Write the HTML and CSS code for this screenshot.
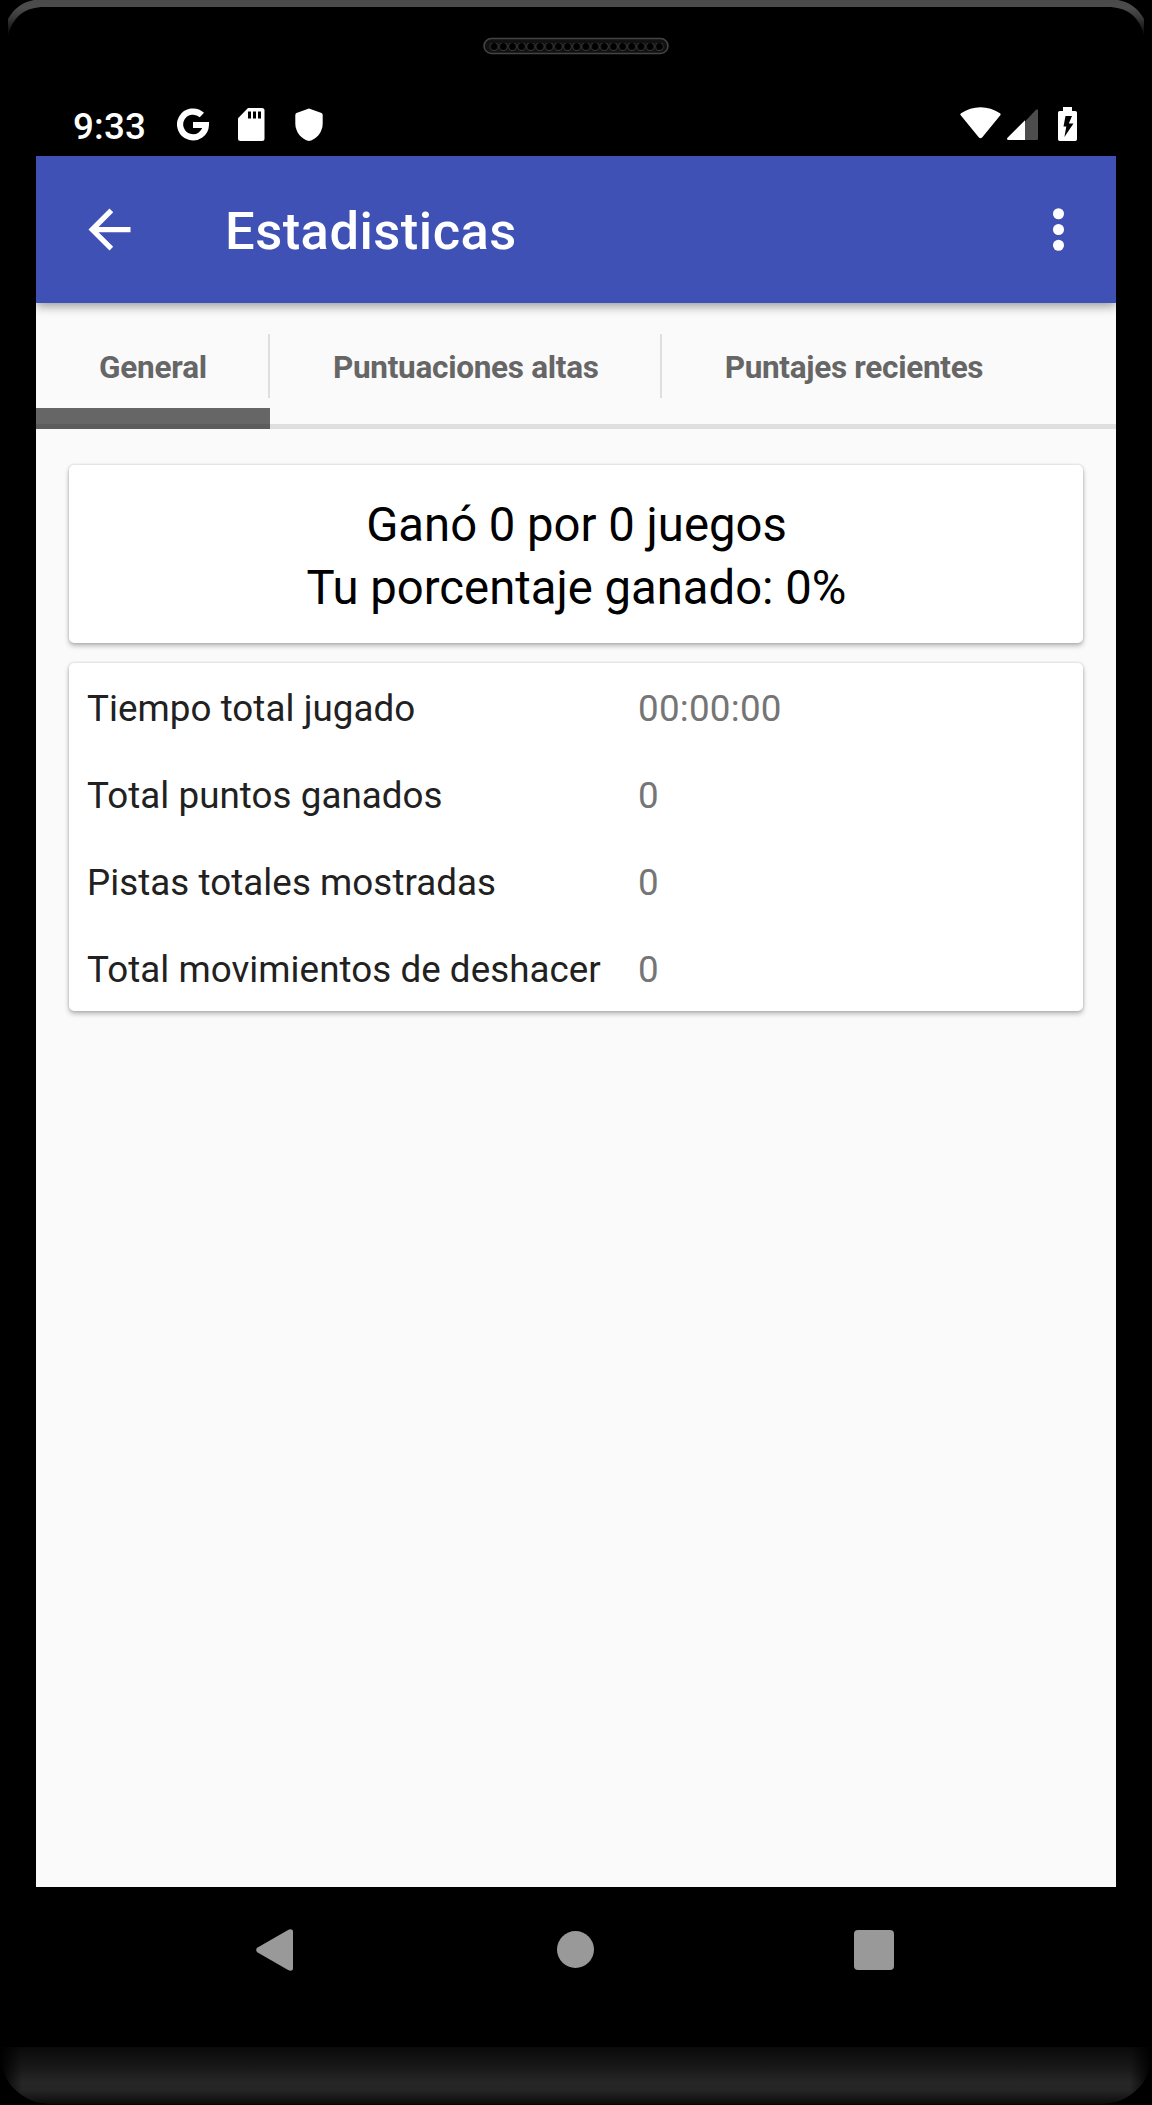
FILE: index.html
```html
<!DOCTYPE html>
<html lang="es">
<head>
    <meta charset="UTF-8">
    <meta name="viewport" content="width=device-width, initial-scale=1.0">
    <title>Estadisticas</title>
    <link rel="stylesheet" href="styles.css">
</head>
<body>
    <div class="phone">
        <svg class="bezel-top" width="1152" height="37" viewBox="0 0 1152 37">
            <defs>
                <linearGradient id="edge" x1="0" y1="0" x2="0" y2="1">
                    <stop offset="0" stop-color="#4a4a4a"/>
                    <stop offset="0.22" stop-color="#4c4c4c"/>
                    <stop offset="0.5" stop-color="#383838"/>
                    <stop offset="1" stop-color="#000"/>
                </linearGradient>
            </defs>
            <path fill="url(#edge)" d="M8 36V19Q17 3 34 0H1118Q1135 3 1144 19V36Q1138 9 1111 7H41Q14 9 8 36Z"/>
        </svg>
        <svg class="speaker" width="186" height="18" viewBox="0 0 186 18">
            <defs>
                <pattern id="holes" x="6.5" y="0" width="9.18" height="18" patternUnits="userSpaceOnUse">
                    <circle cx="4.6" cy="9.5" r="4" fill="#000" stroke="#383838" stroke-width="1"/>
                    <path d="M0 2H9.2V6H0z" fill="#111"/>
                </pattern>
            </defs>
            <rect x="1" y="1.5" width="184" height="15" rx="7.5" fill="#111" stroke="#444" stroke-width="1.6"/>
            <rect x="6.5" y="3" width="174" height="12" fill="url(#holes)"/>
        </svg>

        <div class="status-bar">
            <span class="time">9:33</span>
            <svg class="icon-google" width="32" height="33" viewBox="0 0 32 33">
                <path d="M24.9 7.1A12.9 12.9 0 1 0 28.9 17H16" fill="none" stroke="#fff" stroke-width="6.2"/>
            </svg>
            <svg class="icon-sd" width="27" height="33" viewBox="0 0 27 33">
                <path fill="#fff" d="M10 0H24Q26.500 0 26.500 2.500V30.500Q26.500 33 24 33H2.500Q0 33 0 30.500V10.300z"/>
                <path d="M10 3.500h3v7h-3zM15 3.500h3v7h-3zM20 3.500h3v7h-3z"/>
            </svg>
            <svg class="icon-shield" width="28" height="33" viewBox="0 0 28 33">
                <path fill="#fff" d="M14 .5L26.500 5Q27.700 5.500 27.700 7V15.500C27.700 24 21.500 31.500 14 33C6.500 31.500.3 24 .3 15.500V7Q.3 5.500 1.500 5z"/>
            </svg>
            <svg class="icon-wifi" width="41" height="32" viewBox="0 0 41 32">
                <path fill="#fff" d="M.7 8.300Q-.1 7 1 6.300Q10 .3 20.500.3T40 6.300Q41.100 7 40.300 8.300L22.300 30.300Q20.500 32.300 18.700 30.300z"/>
            </svg>
            <svg class="icon-signal" width="31" height="31" viewBox="0 0 31 31">
                <path fill="#4d4d4d" d="M18 12.500L29 .8Q31 -.5 31 1.500V29.500Q31 31 29.500 31H18z"/>
                <path fill="#fff" d="M18 11.300V31H1.500Q-.8 31 .5 28.800z"/>
            </svg>
            <svg class="icon-battery" width="19" height="34" viewBox="0 0 19 34">
                <path fill="#fff" d="M5 0H14V4H17.300Q19 4 19 5.700V32.300Q19 34 17.300 34H1.700Q0 34 0 32.300V5.700Q0 4 1.700 4H5z"/>
                <path d="M7.500 9H14L10.800 16.600H15.500L6.400 30L8.300 19.500H5.500z"/>
            </svg>
        </div>

        <main class="screen">
            <header class="app-bar">
                <svg width="63" height="63" viewBox="0 0 24 24">
                    <path fill="#fff" d="M20 11H7.830l5.590-5.590L12 4l-8 8 8 8 1.410-1.410L7.830 13H20v-2z"/>
                </svg>
                <h1>Estadisticas</h1>
                <svg width="63" height="63" viewBox="0 0 24 24" fill="#fff">
                    <circle cx="12" cy="6" r="2.100"/>
                    <circle cx="12" cy="12" r="2.100"/>
                    <circle cx="12" cy="18" r="2.100"/>
                </svg>
            </header>

            <nav class="tabs">
                <a class="tab active">General</a>
                <a class="tab">Puntuaciones altas</a>
                <a class="tab">Puntajes recientes</a>
            </nav>

            <section class="card summary">
                <p>Ganó 0 por 0 juegos</p>
                <p>Tu porcentaje ganado: 0%</p>
            </section>

            <dl class="card stats">
                <dt>Tiempo total jugado</dt>
                <dd>00:00:00</dd>
                <dt>Total puntos ganados</dt>
                <dd>0</dd>
                <dt>Pistas totales mostradas</dt>
                <dd>0</dd>
                <dt>Total movimientos de deshacer</dt>
                <dd>0</dd>
            </dl>
        </main>

        <div class="nav-bar">
            <svg width="37" height="42" viewBox="0 0 37 42">
                <path fill="#999" d="M1.200 18.800L32.500.7Q37 -.8 37 3V39Q37 42.800 32.500 41.300L1.200 23.200Q-.8 21 1.200 18.800z"/>
            </svg>
            <span class="home"></span>
            <span class="recents"></span>
        </div>
        <div class="bezel-bottom"></div>
    </div>
</body>
</html>
```

FILE: styles.css
```css
* {
    box-sizing: border-box;
}

body {
    margin: 0;
    background-color: #000;
    font-family: Roboto, "Liberation Sans", sans-serif;
}

h1, p, dl, dd {
    margin: 0;
}

svg {
    display: block;
    flex-shrink: 0;
}

.phone {
    display: flex;
    flex-direction: column;
    width: 1152px;
    height: 2105px;
    overflow: hidden;
    background-color: #000;
}

.speaker {
    margin-left: 483px;
}

/* status bar */
.status-bar {
    display: flex;
    align-items: center;
    height: 64px;
    margin-top: 37px;
    padding: 0 75px 0 73px;
}

.time {
    width: 104px;
    color: #fff;
    font-size: 36.75px;
    font-weight: 500;
    line-height: 40px;
    letter-spacing: 0.2px;
    margin-top: 5px;
}

.icon-sd {
    margin-left: 29px;
}

.icon-shield {
    margin-left: 30px;
}

.icon-wifi {
    margin-left: auto;
    margin-top: -2px;
}

.icon-signal {
    margin-left: 6px;
}

.icon-battery {
    margin-left: 20px;
}

/* app */
.screen {
    width: 1080px;
    height: 1731px;
    margin-left: 36px;
    overflow: hidden;
    background-color: #fafafa;
}

.app-bar {
    display: flex;
    align-items: center;
    height: 147px;
    padding: 0 26px 0 42px;
    background-color: #3f51b5;
    box-shadow: 0 3px 10px rgba(0, 0, 0, 0.4);
}

.app-bar h1 {
    flex: 1;
    margin-left: 84px;
    padding-top: 3px;
    color: #fff;
    font-size: 52.5px;
    font-weight: 500;
    line-height: 62px;
    letter-spacing: 0.48px;
}

.tabs {
    display: flex;
    height: 126px;
    background: linear-gradient(#dfdfdf, #dfdfdf) bottom / 100% 5px no-repeat;
}

.tab {
    display: flex;
    align-items: center;
    padding: 3px 63px 0;
    color: #666;
    font-size: 31.5px;
    font-weight: 700;
    letter-spacing: -0.29px;
    white-space: nowrap;
    background: linear-gradient(#dfdfdf, #dfdfdf) right 31px / 2px 64px no-repeat;
}

.tab:last-child {
    background: none;
}

.tab.active {
    letter-spacing: -0.2px;
    background:
        linear-gradient(#5c5c5c, #5c5c5c) bottom / 100% 5px no-repeat,
        linear-gradient(#666, #666) bottom / 100% 21px no-repeat,
        linear-gradient(#dfdfdf, #dfdfdf) right 31px / 2px 64px no-repeat;
}

.card {
    margin: 0 33px;
    background-color: #fff;
    border-radius: 5px;
    box-shadow: 0 3px 5px rgba(0, 0, 0, 0.26), 0 0 3px rgba(0, 0, 0, 0.18);
}

.summary {
    height: 178px;
    margin-top: 36px;
    padding: 29px 0 0 1px;
    color: #000;
    font-size: 47.25px;
    line-height: 63px;
    text-align: center;
}

.stats {
    display: grid;
    grid-template-columns: 551px 1fr;
    grid-auto-rows: 87px;
    height: 348px;
    margin-top: 20px;
    padding: 2px 18px 0;
    font-size: 36.75px;
    line-height: 87px;
}

.stats dt {
    color: #212121;
    letter-spacing: 0.05px;
}

.stats dd {
    color: #757575;
    letter-spacing: 0.25px;
}

/* navigation */
.nav-bar {
    display: flex;
    justify-content: space-between;
    align-items: center;
    height: 126px;
    padding: 0 258px 0 256px;
}

.home {
    width: 37px;
    height: 37px;
    margin: 0 0 1px 3px;
    border-radius: 50%;
    background-color: #999;
}

.recents {
    width: 40px;
    height: 40px;
    border-radius: 4px;
    background-color: #999;
}

.bezel-bottom {
    height: 57px;
    margin: 34px 0 0;
    border-radius: 0 0 50px 50px;
    background:
        linear-gradient(90deg, #000, transparent 22px, transparent calc(100% - 22px), #000),
        linear-gradient(#0a0a0a, #181818 35%, #262626 62%, #252525 76%, #0c0c0c);
}
```
